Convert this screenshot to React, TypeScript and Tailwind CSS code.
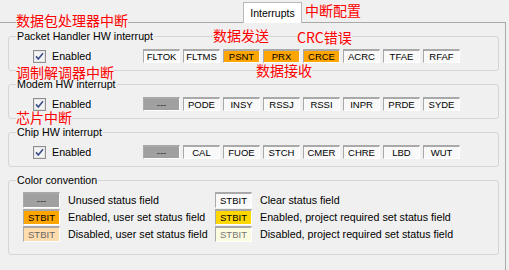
import React from "react";

type Kind = "clear" | "unused" | "on" | "off" | "req" | "reqOff";

const cellColors: Record<Kind, string> = {
  clear: "bg-[#f9f9f9] text-black",
  unused: "bg-[#a0a0a0] text-[#2a2a2a]",
  on: "bg-[#ffa500] text-black",
  off: "bg-[#ffdcae] text-[#666666]",
  req: "bg-[#ffd700] text-black",
  reqOff: "bg-[#fbfbe0] text-[#777777]",
};

const Cell = ({ label, kind = "clear", tall = false }: { label: string; kind?: Kind; tall?: boolean }) => (
  <div
    className={`flex w-[37px] shrink-0 items-center justify-center border-t-2 border-l border-r border-b border-t-[#a9a9a9] border-l-[#a9a9a9] border-r-white border-b-white text-[9.5px] leading-none ${
      tall ? "h-[16px]" : "h-[14px]"
    } ${cellColors[kind]}`}
  >
    {label}
  </div>
);

const Check = () => (
  <svg width="13" height="13" viewBox="0 0 13 13">
    <rect x="0.5" y="0.5" width="12" height="12" fill="#f4f4f4" stroke="#8f8f8f" />
    <rect x="1.5" y="1.5" width="10" height="10" fill="none" stroke="#e4e4e4" />
    <path d="M3 6.4 L5.3 9 L10 3.3" fill="none" stroke="#3c4f8a" strokeWidth="1.6" />
  </svg>
);

const Group = ({ title, children }: { title: string; children: React.ReactNode }) => (
  <fieldset className="rounded-[3px] border border-[#d5d5d5]">
    <legend className="ml-[7px] px-[1px] text-[10.7px] leading-[13px]">{title}</legend>
    {children}
  </fieldset>
);

const interruptRows: { title: string; cells: [string, Kind][] }[] = [
  {
    title: "Packet Handler HW interrupt",
    cells: [
      ["FLTOK", "clear"],
      ["FLTMS", "clear"],
      ["PSNT", "on"],
      ["PRX", "on"],
      ["CRCE", "on"],
      ["ACRC", "clear"],
      ["TFAE", "clear"],
      ["RFAF", "clear"],
    ],
  },
  {
    title: "Modem HW interrupt",
    cells: [
      ["---", "unused"],
      ["PODE", "clear"],
      ["INSY", "clear"],
      ["RSSJ", "clear"],
      ["RSSI", "clear"],
      ["INPR", "clear"],
      ["PRDE", "clear"],
      ["SYDE", "clear"],
    ],
  },
  {
    title: "Chip HW interrupt",
    cells: [
      ["---", "unused"],
      ["CAL", "clear"],
      ["FUOE", "clear"],
      ["STCH", "clear"],
      ["CMER", "clear"],
      ["CHRE", "clear"],
      ["LBD", "clear"],
      ["WUT", "clear"],
    ],
  },
];

const legend: [string, Kind, string, string, Kind, string][] = [
  ["---", "unused", "Unused status field", "STBIT", "clear", "Clear status field"],
  ["STBIT", "on", "Enabled, user set status field", "STBIT", "req", "Enabled, project required set status field"],
  ["STBIT", "off", "Disabled, user set status field", "STBIT", "reqOff", "Disabled, project required set status field"],
];

const notes: { text: string; pos: string }[] = [
  { text: "数据包处理器中断", pos: "left-[16px] top-[14px]" },
  { text: "中断配置", pos: "left-[305px] top-[4px]" },
  { text: "数据发送", pos: "left-[213px] top-[29px]" },
  { text: "CRC错误", pos: "left-[297px] top-[31px]" },
  { text: "数据接收", pos: "left-[256px] top-[64px]" },
  { text: "调制解调器中断", pos: "left-[16px] top-[66px]" },
  { text: "芯片中断", pos: "left-[16px] top-[111px]" },
];

export default function App() {
  return (
    <div className="relative h-[270px] w-[509px] overflow-hidden bg-[#f0f0f0] font-['Liberation_Sans',Arial,sans-serif] text-[10.7px] leading-[13px] text-black">
      {/* tab strip */}
      <div className="flex h-[22px]">
        <div className="relative z-10 ml-[243px] mt-[2px] flex h-[21px] w-[59px] items-center justify-center border border-b-0 border-[#b9b9b9] bg-white text-[10.5px]">
          Interrupts
        </div>
      </div>

      {/* tab page */}
      <div className="flex h-[250px] w-[506px] flex-col gap-[7px] border-t border-r border-[#a9a9a9] pl-[8px] pr-[6px] pt-[7px]">
        {interruptRows.map((row) => (
          <Group key={row.title} title={row.title}>
            <div className="flex h-[27px] items-center pb-[7px] pt-[6px]">
              <div className="flex w-[134px] items-center pl-[24px]">
                <Check />
                <span className="ml-[6px]">Enabled</span>
              </div>
              <div className="flex gap-[3px]">
                {row.cells.map(([label, kind]) => (
                  <Cell key={label + kind} label={label} kind={kind} />
                ))}
              </div>
            </div>
          </Group>
        ))}

        <Group title="Color convention">
          <div className="grid grid-cols-[37px_139px_37px_auto] items-center gap-x-[8px] gap-y-[1px] pb-[12px] pl-[14px] pt-[5px]">
            {legend.map(([l1, k1, t1, l2, k2, t2]) => (
              <React.Fragment key={t1}>
                <Cell label={l1} kind={k1} tall />
                <span className="whitespace-nowrap">{t1}</span>
                <Cell label={l2} kind={k2} tall />
                <span className="whitespace-nowrap">{t2}</span>
              </React.Fragment>
            ))}
          </div>
        </Group>
      </div>

      {/* annotations */}
      {notes.map((n) => (
        <span
          key={n.text}
          className={`absolute z-20 whitespace-nowrap bg-[#f0f0f0] font-['Noto_Sans_CJK_SC',sans-serif] text-[14px] leading-[13px] text-[#ff0000] ${n.pos}`}
        >
          {n.text}
        </span>
      ))}
    </div>
  );
}
